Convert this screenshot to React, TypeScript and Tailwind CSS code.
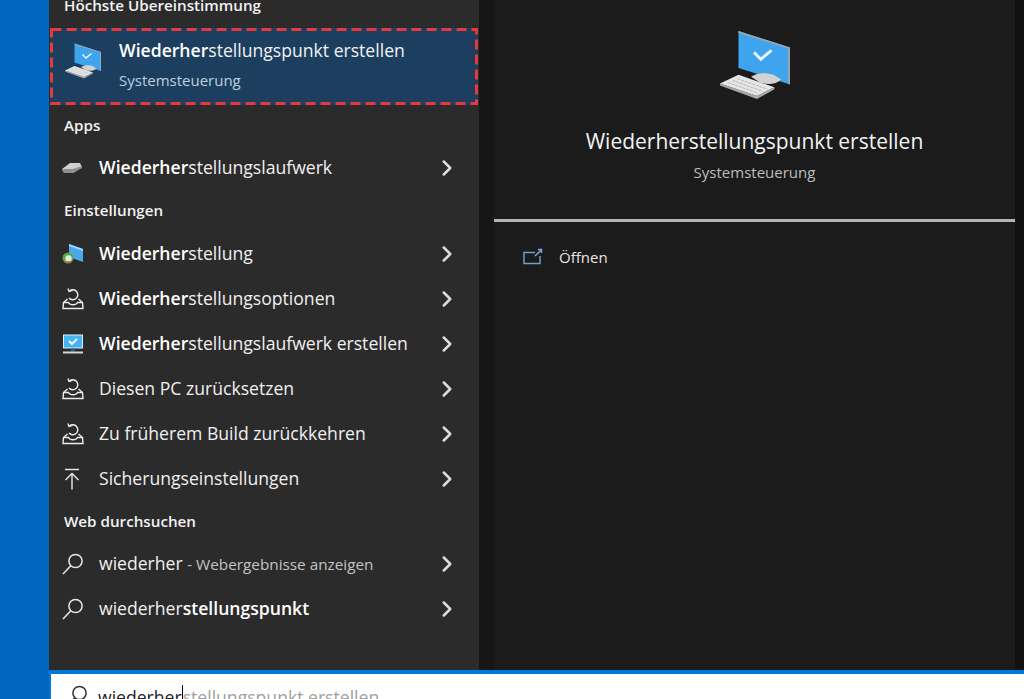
import { ChevronRight } from 'lucide-react';
import type { ReactNode } from 'react';

function PcIcon({ className }: { className: string }) {
  return (
    <svg viewBox="0 0 74 72" className={className}>
      <path d="M20 1 L73 18 L73 56 L20 39 Z" fill="#3fa4ee" />
      <path d="M20 1 L73 18 L71 19 L20 3 Z" fill="#9aa7b0" />
      <path d="M71 19 L73 18 L73 56 L71 55 Z" fill="#9aa7b0" />
      <path d="M36 23 L43 30 L54 21" fill="none" stroke="#eaf6ff" strokeWidth="3" />
      <path d="M33 48 C40 43 50 44 56 46 L64 51 C58 57 48 56 42 54 Z" fill="#d2d2d2" />
      <path d="M1 55 L20 46 L57 59 L39 68 Z" fill="#e6e6e6" />
      <path d="M9 54 L40 65 M14 52 L45 63 M19 50 L50 61" stroke="#b5b5b5" strokeWidth="1" strokeDasharray="3 1" />
      <path d="M39 68 L57 59 L57 61 L39 71 L1 57 L1 55 Z" fill="#a9a9a9" />
    </svg>
  );
}

function DriveIcon() {
  return (
    <svg viewBox="0 0 20 12" className="w-5 h-3">
      <path d="M0 7 L8 1 L18 1 L20 5 L11 11 L2 11 Z" fill="#cfcfcf" />
      <path d="M0 7 L11 7 L20 4 L20 6 L11 11 L2 11 Z" fill="#8f8f8f" />
    </svg>
  );
}

function RestoreIcon() {
  return (
    <svg viewBox="0 0 22 22" className="w-[22px] h-[22px]" fill="none" stroke="#ececec" strokeWidth="1.4">
      <path d="M7.5 3 A5 5 0 1 1 7 10" />
      <path d="M6 0.5 L7 3.4 L10.5 2.4" />
      <path d="M5.5 11 L1.5 14.5 L1 20.5 L21 20.5 L20.5 14.5 L16.5 11" />
      <path d="M1.5 14.5 L6.5 14.5 C8 17.5 14 17.5 15.5 14.5 L20.5 14.5" />
    </svg>
  );
}

function WinIcon() {
  return (
    <svg viewBox="0 0 22 20" className="w-[22px] h-5">
      <path d="M7 0 L21 5 L21 18 L7 13 Z" fill="#4aa8ea" />
      <path d="M7 0 L21 5 L21 7 L7 2 Z" fill="#9fd6fb" />
      <circle cx="6" cy="14" r="5.5" fill="#5da545" />
      <circle cx="6.5" cy="14.5" r="3.2" fill="#e4e9e4" />
      <path d="M3 18 L9 18" stroke="#c65a4f" strokeWidth="1.5" />
    </svg>
  );
}

function MonitorIcon() {
  return (
    <svg viewBox="0 0 22 20" className="w-[22px] h-5">
      <rect x="1" y="0.5" width="20" height="14" fill="#d8eefc" />
      <rect x="2" y="1.5" width="18" height="12" fill="#45b4f5" />
      <path d="M7 7 L10 10 L15 5" fill="none" stroke="#ffffff" strokeWidth="1.8" />
      <rect x="9" y="14.5" width="4" height="3" fill="#1a5f93" />
      <rect x="1" y="17.5" width="20" height="2" fill="#cfd8de" />
    </svg>
  );
}

function BackupIcon() {
  return (
    <svg viewBox="0 0 20 22" className="w-5 h-[22px]" fill="none" stroke="#ececec" strokeWidth="1.4">
      <path d="M3 1.5 L17 1.5" />
      <path d="M10 21.5 L10 6" />
      <path d="M3.5 12 L10 5.5 L16.5 12" />
    </svg>
  );
}

function SearchIcon({ className = 'w-[22px] h-[22px]', stroke = '#e6e6e6' }: { className?: string; stroke?: string }) {
  return (
    <svg viewBox="0 0 22 22" className={className} fill="none" stroke={stroke} strokeWidth="1.5">
      <circle cx="13.5" cy="8" r="6.6" />
      <path d="M8.8 12.8 L1 21" />
    </svg>
  );
}

function OpenIcon() {
  return (
    <svg viewBox="0 0 20 18" className="w-5 h-[18px]" fill="none" stroke="#6f9fc9" strokeWidth="1.5">
      <path d="M12 4.5 L1 4.5 L1 15.5 L17 15.5 L17 8" />
      <path d="M12 8 L18 2" stroke="#7da8e0" />
      <path d="M15 1.5 L18.5 1.5 L18.5 5" stroke="#7da8e0" />
    </svg>
  );
}

function Heading({ children, className = '' }: { children: ReactNode; className?: string }) {
  return <div className={`pl-[15px] text-[15.2px] font-semibold leading-[22px] text-[#f2f2f2] ${className}`}>{children}</div>;
}

function Row({ icon, children, className = 'h-[45px]' }: { icon: ReactNode; children: ReactNode; className?: string }) {
  return (
    <div className={`flex items-center pr-[19px] ${className}`}>
      <div className="w-[50px] pl-[13px] flex justify-start items-center">{icon}</div>
      <div className="flex-1 text-[17.6px] text-[#f0f0f0] whitespace-nowrap">{children}</div>
      <ChevronRight size={26} strokeWidth={2.3} className="text-[#dcdcdc]" />
    </div>
  );
}

const B = ({ children }: { children: ReactNode }) => <span className="font-semibold text-white">{children}</span>;

export default function App() {
  return (
    <div className="w-[1024px] h-[699px] overflow-hidden flex bg-[#0067c0] font-['Open_Sans','Noto_Sans',sans-serif]">
      <div className="w-[49px] shrink-0 bg-[#0067c0]" />
      <div className="flex-1 flex flex-col min-w-0">
        <div className="h-[670px] shrink-0 flex bg-[#161616]">
          <div className="w-[430px] shrink-0 bg-[#2b2b2b] -mt-[6px] overflow-hidden">
            <Heading>Höchste Übereinstimmung</Heading>
            <div className="relative mt-[12px] mx-[1px] h-[77px] bg-[#1c3f60] flex items-center pl-[14px] pb-[6px]">
              <svg className="absolute inset-0 w-full h-full" fill="none">
                <rect x="1.5" y="1.5" width="425" height="74" stroke="#e8383f" strokeWidth="3" strokeDasharray="10 5" />
              </svg>
              <PcIcon className="w-[38px] h-[36px] mb-[6px]" />
              <div className="ml-[17px]">
                <div className="text-[17.6px] leading-[24px] text-[#f2f2f2]"><B>Wiederher</B>stellungspunkt erstellen</div>
                <div className="mt-[8px] text-[15px] leading-[20px] text-[#bdd0df]">Systemsteuerung</div>
              </div>
            </div>
            <Heading className="mt-[9px]">Apps</Heading>
            <Row icon={<DriveIcon />} className="mt-[9px] h-[45px]"><B>Wiederher</B>stellungslaufwerk</Row>
            <Heading className="mt-[9px]">Einstellungen</Heading>
            <div className="mt-[10px]">
              <Row icon={<WinIcon />}><B>Wiederher</B>stellung</Row>
              <Row icon={<RestoreIcon />}><B>Wiederher</B>stellungsoptionen</Row>
              <Row icon={<MonitorIcon />}><B>Wiederher</B>stellungslaufwerk erstellen</Row>
              <Row icon={<RestoreIcon />}>Diesen PC zurücksetzen</Row>
              <Row icon={<RestoreIcon />}>Zu früherem Build zurückkehren</Row>
              <Row icon={<BackupIcon />}>Sicherungseinstellungen</Row>
            </div>
            <Heading className="mt-[9px]">Web durchsuchen</Heading>
            <div className="mt-[9px]">
              <Row icon={<SearchIcon />}>wiederher <span className="text-[15.3px] text-[#c4c4c4]">- Webergebnisse anzeigen</span></Row>
              <Row icon={<SearchIcon />}>wiederher<B>stellungspunkt</B></Row>
            </div>
          </div>
          <div className="w-[15px] shrink-0" />
          <div className="w-[521px] shrink-0 bg-[#1b1b1b] flex flex-col">
            <div className="h-[222px] shrink-0 flex flex-col items-center border-b-[3px] border-[#b3b3b3]">
              <PcIcon className="mt-[30px] w-[74px] h-[70px]" />
              <div className="mt-[26px] text-[21px] leading-[30px] text-[#f2f2f2]">Wiederherstellungspunkt erstellen</div>
              <div className="mt-[6px] text-[15px] leading-[20px] text-[#bdbdbd]">Systemsteuerung</div>
            </div>
            <div className="mt-[24px] pl-[29px] flex items-center">
              <OpenIcon />
              <span className="ml-[16px] text-[15px] text-[#e6e6e6]">Öffnen</span>
            </div>
          </div>
          <div className="flex-1 bg-[#111111]" />
        </div>
        <div className="flex-1 border-t-4 border-l-2 border-[#0078d4] bg-white flex items-start pl-[15px] pt-[11px] overflow-hidden">
          <SearchIcon className="w-[22px] h-[22px] shrink-0" stroke="#333333" />
          <div className="ml-[10px] text-[17.6px] leading-[24px] whitespace-nowrap flex">
            <span className="text-[#222222]">wiederher</span>
            <span className="border-l border-black text-[#a0a0a0]">stellungspunkt erstellen</span>
          </div>
        </div>
      </div>
    </div>
  );
}
